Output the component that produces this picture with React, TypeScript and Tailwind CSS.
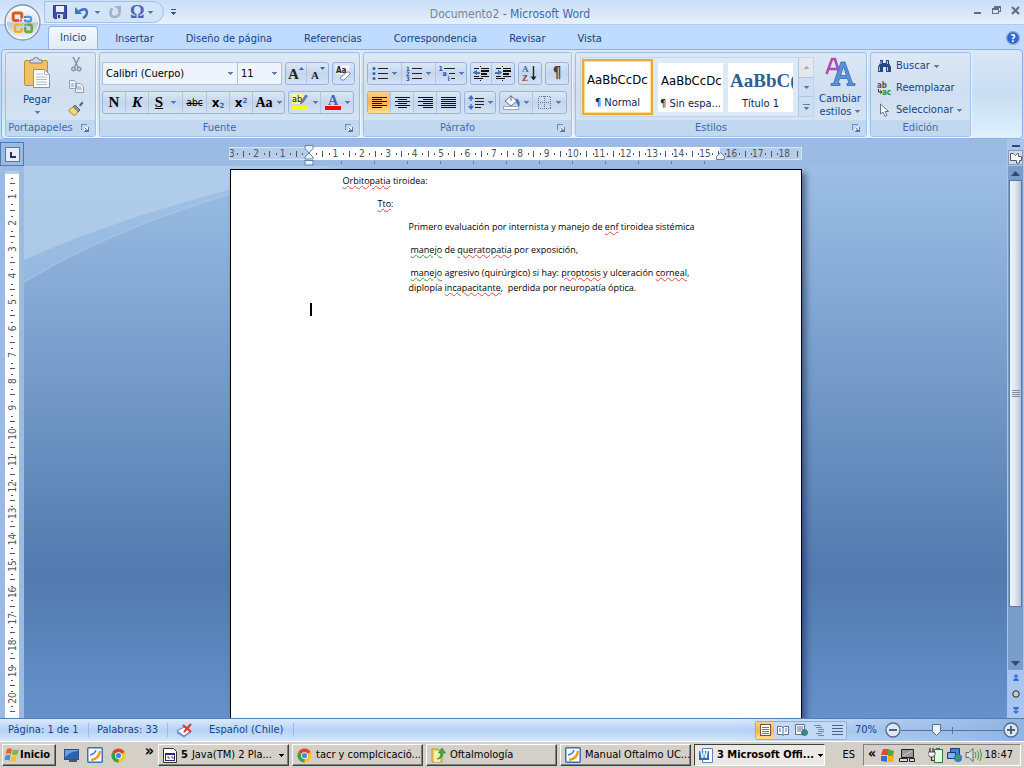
import type { ReactNode } from "react";
import { clsx } from "clsx";

const navy = "text-[#15428b]";
const boxClass =
  "flex h-[23px] items-stretch overflow-hidden rounded-[3px] border border-[#98b3d8] bg-gradient-to-b from-[#dbe7f6] via-[#c5d6ec] to-[#d3e3f5] divide-x divide-[#afc6e2]";

const tabs = [
  "Inicio",
  "Insertar",
  "Diseño de página",
  "Referencias",
  "Correspondencia",
  "Revisar",
  "Vista",
];

const styles = [
  { sample: "AaBbCcDc", name: "¶ Normal", heading: false },
  { sample: "AaBbCcDc", name: "¶ Sin espa...", heading: false },
  { sample: "AaBbC(", name: "Título 1", heading: true },
];

function Caret({ className = "text-[#5b7db1]" }: { className?: string }) {
  return (
    <svg width="5" height="3" viewBox="0 0 5 3" className={clsx("shrink-0", className)} shapeRendering="crispEdges">
      <path d="M0 0h5v1h-1v1h-1v1h-1v-1h-1v-1h-1z" fill="currentColor" />
    </svg>
  );
}

function Tool({
  label,
  width,
  caret,
  active,
  children,
}: {
  label: string;
  width: string;
  caret?: boolean;
  active?: boolean;
  children: ReactNode;
}) {
  return (
    <button
      type="button"
      aria-label={label}
      className={clsx(
        "flex items-center justify-center gap-1 text-black",
        width,
        active && "bg-gradient-to-b from-[#fbd08b] via-[#fdb04b] to-[#fde08c]"
      )}
    >
      {children}
      {caret && <Caret />}
    </button>
  );
}

function Launcher({ label }: { label: string }) {
  return (
    <button type="button" aria-label={label} className="absolute right-1.5 top-1">
      <svg width="8" height="8" viewBox="0 0 8 8" shapeRendering="crispEdges">
        <path d="M0.5 6V0.5H6" fill="none" stroke="#6a8cbb" />
        <path d="M3 3l3 3M7.5 3v4.5H3" fill="none" stroke="#5578ab" />
        <rect x="3" y="3" width="4" height="4" fill="#fff" opacity=".6" />
        <path d="M4 4h1v1h1v1h1v1h-3v-1h1v-1h-1z" fill="#5578ab" />
      </svg>
    </button>
  );
}

function Group({
  title,
  width,
  launcher,
  children,
}: {
  title: string;
  width: string;
  launcher?: boolean;
  children: ReactNode;
}) {
  return (
    <section
      className={clsx(
        "flex h-[85px] shrink-0 flex-col overflow-hidden rounded-[3px] border border-[#a3bfdf] bg-gradient-to-b from-[#dde8f5] via-[#cfdef0] to-[#d9e8f7] shadow-[1px_1px_0_#eef6ff]",
        width
      )}
    >
      <div className="flex flex-1">{children}</div>
      <div className="relative h-4 bg-[#c1d8f0] text-center leading-4 text-[#3e6aaa]">
        <span className={clsx(launcher && "pr-5")}>{title}</span>
        {launcher && <Launcher label={`Más opciones de ${title}`} />}
      </div>
    </section>
  );
}

function OfficeLogo() {
  return (
    <svg width="38" height="38" viewBox="0 0 38 38">
      <defs>
        <linearGradient id="orb" x1="0" y1="0" x2="0" y2="1">
          <stop offset="0" stopColor="#fbfcfe" />
          <stop offset=".48" stopColor="#dfe5ee" />
          <stop offset=".52" stopColor="#bcc7d6" />
          <stop offset="1" stopColor="#f4f8fc" />
        </linearGradient>
      </defs>
      <circle cx="18.500" cy="18.500" r="17.500" fill="url(#orb)" stroke="#7f93b2" strokeWidth="1.300" />
      <circle cx="18.500" cy="18.500" r="16.200" fill="none" stroke="#fff" opacity=".8" />
      <g fill="none" strokeLinecap="round">
        <path d="M14 16.500h-3q-1.800 0-1.800-1.800v-4q0-1.800 1.800-1.800h5q1.800 0 1.800 1.800v2.500" stroke="#dd5a1c" strokeWidth="3" />
        <path d="M22 12.800h3.500q1.500 0 1.500 1.500v1.500q0 1.500-1.500 1.500H22" stroke="#4b9bd8" strokeWidth="2.200" />
        <path d="M14 20.800h-1.500q-1.500 0-1.500 1.500v4q0 1.500 1.500 1.500h3.500q1.500 0 1.500-1.500V25" stroke="#f2ac28" strokeWidth="2.400" />
        <path d="M24 20.800h2q1.800 0 1.800 1.800v3.500q0 1.800-1.800 1.800h-3q-1.800 0-1.800-1.800V24" stroke="#6cab3a" strokeWidth="2.600" />
      </g>
      <g fill="#3b8fd0">
        <rect x="20" y="12" width="2" height="2" />
        <rect x="20" y="15.500" width="2" height="2" />
      </g>
      <g fill="#dd5a1c">
        <rect x="16" y="15.500" width="2" height="2" />
      </g>
      <rect x="16" y="20" width="2" height="2" fill="#f2ac28" />
      <rect x="20.500" y="20" width="2" height="2" fill="#6cab3a" />
    </svg>
  );
}

function Lines({ rows }: { rows: [number, number][] }) {
  return (
    <svg width="15" height="13" viewBox="0 0 15 13" shapeRendering="crispEdges">
      {rows.map(([x, w], i) => (
        <rect key={i} x={x} y={i * 2 + 1} width={w} height="1" fill="#111" />
      ))}
    </svg>
  );
}

const full: [number, number] = [0, 15];

function ListIcon({ kind }: { kind: "bullet" | "number" | "multi" }) {
  return (
    <svg width={kind === "multi" ? 17 : 16} height="15" viewBox="0 0 16 15">
      {kind === "bullet" &&
        [2.5, 7.5, 12.5].map((y) => <circle key={y} cx="2" cy={y} r="1.500" fill="#3a5fa8" />)}
      {kind === "number" &&
        ["1", "2", "3"].map((n, i) => (
          <text key={n} x="0" y={5 + i * 5} fontSize="6" fontWeight="bold" fill="#2d55a5">
            {n}
          </text>
        ))}
      {kind === "multi" && (
        <g fontSize="7" fontWeight="bold" fill="#2d55a5">
          <text x="0" y="5">1</text>
          <text x="4" y="10">a</text>
          <text x="9" y="15">i</text>
        </g>
      )}
      <g fill="#222" shapeRendering="crispEdges">
        {kind === "multi" ? (
          <>
            <rect x="5" y="2" width="11" height="1" />
            <rect x="10" y="7" width="6" height="1" />
            <rect x="12" y="12" width="4" height="1" />
          </>
        ) : (
          [2, 7, 12].map((y) => <rect key={y} x="6" y={y} width="10" height="1" />)
        )}
      </g>
    </svg>
  );
}

function IndentIcon({ right }: { right?: boolean }) {
  return (
    <svg width="17" height="15" viewBox="0 0 17 15" shapeRendering="crispEdges">
      <g fill="#111">
        <rect x="1" y="2" width="5" height="1" />
        <rect x="8" y="2" width="8" height="1" />
        <rect x="8" y="4" width="8" height="2" />
        <rect x="8" y="7" width="6" height="2" />
        <rect x="8" y="10" width="8" height="1" />
        <rect x="1" y="10" width="5" height="1" />
        <rect x="1" y="12" width="9" height="1" />
        <rect x="7" y="0" width="1" height="1" />
        <rect x="7" y="14" width="1" height="1" />
      </g>
      <path d={right ? "M7 6.500l-4-3v2h-3v2h3v2z" : "M0 6.500l4-3v2h3v2h-3v2z"} fill="#4472c4" />
    </svg>
  );
}

function Binoculars() {
  return (
    <svg width="15" height="14" viewBox="0 0 15 14">
      <path d="M3 1h3v3h3v-3h3v3l2 4v5h-5v-5h-3v5h-5v-5l2-4z" fill="#27477f" />
      <path d="M2.500 8v4M10.500 8v4M4 2v3M10.500 2v3" stroke="#b5cdf0" />
    </svg>
  );
}

function Chrome() {
  return (
    <svg width="15" height="15" viewBox="0 0 16 16" className="shrink-0">
      <circle cx="8" cy="8" r="7.500" fill="#f6c52c" />
      <path d="M8 8L1.500 4.250A7.500 7.500 0 0 1 14.500 4.250z" fill="#dc4434" />
      <path d="M8 8L1.500 4.250A7.500 7.500 0 0 0 8 15.500z" fill="#3f9e49" />
      <circle cx="8" cy="8" r="3.600" fill="#fff" />
      <circle cx="8" cy="8" r="2.800" fill="#4a86d8" />
    </svg>
  );
}

function SwooshDoc() {
  return (
    <svg width="16" height="16" viewBox="0 0 16 16" className="shrink-0">
      <rect x=".75" y=".75" width="14.500" height="14.500" rx="1" fill="#fff" stroke="#3d6fb4" strokeWidth="1.500" />
      <path d="M3 8q5-1 6-5" fill="none" stroke="#3b82d4" strokeWidth="1.500" />
      <path d="M4 13q8-1 9-9" fill="none" stroke="#f09a1a" strokeWidth="2.400" />
    </svg>
  );
}

function WindowsFlag() {
  return (
    <svg width="16" height="16" viewBox="0 0 16 16" className="shrink-0">
      <path d="M3 2q3-1.500 5 0l-1 5q-3-1.500-5.500 0z" fill="#e8602c" />
      <path d="M9 2.500q3 1.500 6 0l-1.500 5q-3 1.500-5.500 0z" fill="#7ab648" />
      <path d="M1.500 8.500q3-1.500 5 0l-1 5q-3-1.500-5 0z" fill="#4a90d9" />
      <path d="M7.500 9q3 1.500 5.500 0l-1.500 5q-2.500 1.500-5 0z" fill="#f5c02c" />
    </svg>
  );
}

const CM = 26.4;

function HorizontalRuler() {
  const zero = 80;
  const marks = Array.from({ length: 22 }, (_, i) => i - 3);
  return (
    <svg width="574" height="26" viewBox="0 0 574 26" className="block" role="img" aria-label="Regla horizontal">
      <rect x=".5" y="7.500" width="572" height="12" fill="#b4cde9" stroke="#d3e4f7" />
      <rect x={zero} y="7" width="411" height="13" fill="#fff" />
      <g fill="#4b5563" fontSize="10" textAnchor="middle">
        {marks.map((n) => {
          const x = zero + n * CM;
          return (
            <g key={n}>
              {n !== 0 && (
                <text x={n === -3 ? x + 2 : x} y="17">
                  {Math.abs(n)}
                </text>
              )}
              {n < 18 && <rect x={Math.round(x + CM * 0.28)} y="13" width="1" height="2" />}
              <rect x={Math.round(x + CM / 2)} y="11" width="1" height="6" />
              {n < 18 && <rect x={Math.round(x + CM * 0.74)} y="13" width="1" height="2" />}
            </g>
          );
        })}
      </g>
      {Array.from({ length: 12 }, (_, i) => (
        <rect key={i} x={112 + i * 33} y="21" width="1" height="3" fill="#5e7fae" />
      ))}
      <g fill="#e8f0fa" stroke="#6482ac">
        <path d="M76 5.500h8v3l-4 4.500 4 4v2h-8v-2l4-4-4-4.500z" />
        <rect x="76" y="20.500" width="8" height="4.500" />
        <path d="M487.500 19.500v-3l4-4 4 4v3z" />
      </g>
    </svg>
  );
}

function VerticalRuler() {
  return (
    <svg width="14" height="600" viewBox="0 0 14 600" className="block" role="img" aria-label="Regla vertical">
      <rect width="14" height="600" fill="#fff" />
      <rect width="14" height="3" fill="#b4cde9" />
      <g fill="#4b5563" fontSize="10" textAnchor="middle">
        {Array.from({ length: 21 }, (_, n) => {
          const y = n * CM - 1;
          return (
            <g key={n}>
              {n > 0 && (
                <text x="0" y="0" transform={`translate(11 ${y}) rotate(-90)`}>
                  {n}
                </text>
              )}
              <rect x="6" y={Math.round(y + CM * 0.3)} width="2" height="1" />
              <rect x="5" y={Math.round(y + CM / 2)} width="5" height="1" />
              <rect x="6" y={Math.round(y + CM * 0.74)} width="2" height="1" />
            </g>
          );
        })}
      </g>
    </svg>
  );
}

function Err({ children, grammar }: { children: ReactNode; grammar?: boolean }) {
  return (
    <span
      className={clsx(
        "underline decoration-wavy decoration-1 underline-offset-1",
        grammar ? "decoration-[#3c9a3c]" : "decoration-[#e04848]"
      )}
    >
      {children}
    </span>
  );
}

function TaskButton({ icon, active, children }: { icon: ReactNode; active?: boolean; children: ReactNode }) {
  return (
    <button
      type="button"
      className={clsx(
        "flex h-[22px] w-[131px] min-w-0 items-center gap-1 whitespace-nowrap border pl-1 pr-1 text-left text-black",
        active
          ? "border-b-white border-l-[#404040] border-r-white border-t-[#404040] bg-[#ebe9e5] font-bold"
          : "border-b-[#404040] border-l-white border-r-[#404040] border-t-white bg-[#d4d0c8] shadow-[inset_-1px_-1px_0_#808080]"
      )}
    >
      {icon}
      {children}
    </button>
  );
}

function TitleBar() {
  return (
    <header className="flex h-[25px] shrink-0 items-center border-b border-[#b0cdf0] bg-gradient-to-b from-[#c9dff8] via-[#d6e6fa] to-[#e6f1fe]">
      <div className="flex flex-1 items-center">
        <div className="ml-11 flex h-[22px] w-[120px] items-center rounded-r-full border border-[#a3c0e6] bg-[#d3e4f9] pl-2">
          <button type="button" aria-label="Guardar">
            <svg width="14" height="14" viewBox="0 0 14 14">
              <path d="M.5.5h13v13h-12l-1-1z" fill="#3f4fae" stroke="#2b3685" />
              <rect x="3" y="1" width="8" height="6" fill="#e9eefb" />
              <rect x="4" y="9" width="6" height="5" fill="#c9d2ee" />
              <rect x="5" y="10" width="2" height="3" fill="#2b3685" />
            </svg>
          </button>
          <button type="button" aria-label="Deshacer" className="ml-2 flex items-center gap-1.5">
            <svg width="14" height="13" viewBox="0 0 14 13">
              <path d="M4 5q7-4 8 1 0 4-4 6" fill="none" stroke="#3f6fc6" strokeWidth="2.400" />
              <path d="M0 1v7h7z" fill="#3f6fc6" />
            </svg>
            <Caret />
          </button>
          <button type="button" aria-label="Rehacer" disabled className="ml-2">
            <svg width="14" height="13" viewBox="0 0 14 13">
              <path d="M4 2q-4 9 3 9 6-1 4-7" fill="none" stroke="#a3b3cc" strokeWidth="2.600" />
              <path d="M6 0h7v6z" fill="#a3b3cc" />
            </svg>
          </button>
          <button type="button" aria-label="Símbolo" className="ml-2 flex items-center gap-1">
            <span className="font-[Liberation_Serif,serif] text-lg font-bold leading-none text-[#3f68b8]">Ω</span>
            <Caret />
          </button>
        </div>
        <button type="button" aria-label="Personalizar barra" className="ml-[7px] flex flex-col items-center gap-0.5">
          <span className="h-px w-[5px] bg-[#33558f]" />
          <Caret className="text-[#33558f]" />
        </button>
      </div>
      <h1 className="pt-1 text-xs text-[#3e6aaa]">
        <span className="text-[#74839b]">Documento2</span> - Microsoft Word
      </h1>
      <div className="flex flex-1 items-center justify-end gap-2.5 pb-1 pr-1 text-[#5f6f88]">
        <button type="button" aria-label="Minimizar">
          <svg width="8" height="9" viewBox="0 0 8 9">
            <rect x="0" y="6" width="7" height="2" fill="currentColor" />
          </svg>
        </button>
        <button type="button" aria-label="Restaurar">
          <svg width="9" height="8" viewBox="0 0 9 8" fill="none" stroke="currentColor" shapeRendering="crispEdges">
            <path d="M2.500 2V.5h6v5h-2M.5 2.500h6v5h-6zM2 1h6M1 3h6" />
          </svg>
        </button>
        <button type="button" aria-label="Cerrar">
          <svg width="9" height="9" viewBox="0 0 9 9" stroke="currentColor" strokeWidth="2.200">
            <path d="M1 1l7 7M8 1l-7 7" />
          </svg>
        </button>
      </div>
    </header>
  );
}

function Ribbon() {
  return (
    <div className="mx-px flex h-[90px] shrink-0 gap-[3px] rounded-[4px] border border-[#8db2e3] bg-gradient-to-b from-[#dae7f6] via-[#c9ddf2] to-[#dff1fe] pl-[3px] pt-0.5">
      <Group title="Portapapeles" width="w-[91px]" launcher>
        <div className="flex w-full">
          <button type="button" className={clsx("flex w-[62px] flex-col items-center pt-1", navy)}>
            <svg width="28" height="32" viewBox="0 0 28 32">
              <rect x="1.500" y="3.500" width="23" height="25" rx="1.500" fill="#eebf63" stroke="#c08e38" />
              <path d="M7 3h3q0-2.500 3-2.500T16 3h3v3H7z" fill="#d6dae2" stroke="#77808f" />
              <path d="M10.500 12.500h11l5 5v13h-16z" fill="#fff" stroke="#8793a8" />
              <path d="M21.500 12.500v5h5M13 17h7M13 20h11M13 22.500h11M13 25h11M13 27.500h11" fill="none" stroke="#aeb9cc" />
            </svg>
            <span className="pt-1">Pegar</span>
            <span className="pt-1">
              <Caret />
            </span>
          </button>
          <div className="flex w-4 flex-col items-center justify-between pb-1 pt-1">
            <button type="button" aria-label="Cortar">
              <svg width="11" height="15" viewBox="0 0 11 15" fill="none" stroke="#8594ac">
                <path d="M2 0l5 10M8.500 0l-5 10" strokeWidth="1.500" />
                <circle cx="2.500" cy="12" r="1.800" strokeWidth="1.400" />
                <circle cx="8" cy="12" r="1.800" strokeWidth="1.400" />
              </svg>
            </button>
            <button type="button" aria-label="Copiar">
              <svg width="15" height="13" viewBox="0 0 15 13" fill="#eef2f8" stroke="#93a1b8">
                <path d="M.5.5h5l2 2v6h-7zM6.500 3.500h5l3 3v6h-8zM8 7h4M8 9h5M2 4h3M2 6h3" />
              </svg>
            </button>
            <button type="button" aria-label="Copiar formato">
              <svg width="16" height="15" viewBox="0 0 16 15">
                <path d="M11 4l3-3.500 1.500 1.500-3 3.500z" fill="#56657f" />
                <path d="M7 4l5 5-2 2-5-5z" fill="#8494b8" stroke="#4a5a80" />
                <path d="M5 6l5 5-3 3.500q-4-1-6.500-5z" fill="#f3d97a" stroke="#a88a30" />
              </svg>
            </button>
          </div>
        </div>
      </Group>

      <Group title="Fuente" width="w-[261px]" launcher>
        <div className="flex flex-col gap-1.5 pl-0.5 pt-[9px]">
          <div className="flex gap-[3px]">
            <div className="flex h-[23px]">
              <label className="relative flex">
                <span className="sr-only">Fuente</span>
                <select className="w-[136px] appearance-none border border-[#abc1de] bg-[#eef4fc] pl-[3px] text-black">
                  <option>Calibri (Cuerpo)</option>
                </select>
                <span className="pointer-events-none absolute right-[5px] top-[10px]">
                  <Caret />
                </span>
              </label>
              <label className="relative flex">
                <span className="sr-only">Tamaño de fuente</span>
                <select className="w-[44px] appearance-none border border-l-0 border-[#abc1de] bg-[#eef4fc] pl-[3px] text-black">
                  <option>11</option>
                </select>
                <span className="pointer-events-none absolute right-[5px] top-[10px]">
                  <Caret />
                </span>
              </label>
            </div>
            <div className={boxClass}>
              <Tool label="Agrandar fuente" width="w-[21px]">
                <svg width="16" height="15" viewBox="0 0 16 15" className="font-[Liberation_Serif,serif]">
                  <text x="0" y="13" fontSize="15" fontWeight="bold" fill="#222">A</text>
                  <path d="M11 4l2.500-3 2.500 3z" fill="#3b64ad" />
                </svg>
              </Tool>
              <Tool label="Encoger fuente" width="w-[21px]">
                <svg width="14" height="15" viewBox="0 0 14 15" className="font-[Liberation_Serif,serif]">
                  <text x="0" y="13" fontSize="11" fontWeight="bold" fill="#222">A</text>
                  <path d="M9 1h5l-2.500 3z" fill="#3b64ad" />
                </svg>
              </Tool>
            </div>
            <div className={boxClass}>
              <Tool label="Borrar formato" width="w-[21px]">
                <svg width="17" height="17" viewBox="0 0 17 17">
                  <rect x=".5" y=".5" width="14" height="9" fill="#fff" opacity=".7" />
                  <text x="1" y="8" fontSize="8" fontWeight="bold" fill="#222">Aa</text>
                  <path d="M5 13l7-6q3-1 3 2l-6 6q-3 1-4-2z" fill="#fff" stroke="#7c8698" />
                </svg>
              </Tool>
            </div>
          </div>
          <div className="flex gap-[3px]">
            <div className={clsx(boxClass, "font-[Liberation_Serif,serif] text-[15px] font-bold leading-none")}>
              <Tool label="Negrita" width="w-[23px]"><b>N</b></Tool>
              <Tool label="Cursiva" width="w-[23px]"><i>K</i></Tool>
              <Tool label="Subrayado" width="w-[34px]" caret><u className="mr-1">S</u></Tool>
              <Tool label="Tachado" width="w-6"><s className="font-[DejaVu_Sans_Condensed,sans-serif] text-[10px] font-normal">abc</s></Tool>
              <Tool label="Subíndice" width="w-[23px]">
                <span className="font-[DejaVu_Sans,sans-serif] text-xs">x<sub className="text-[7px] text-[#3b64ad]">2</sub></span>
              </Tool>
              <Tool label="Superíndice" width="w-[23px]">
                <span className="font-[DejaVu_Sans,sans-serif] text-xs">x<sup className="text-[7px] text-[#3b64ad]">2</sup></span>
              </Tool>
              <Tool label="Cambiar mayúsculas" width="w-[31px]" caret>
                <span className="text-sm">Aa</span>
              </Tool>
            </div>
            <div className={boxClass}>
              <Tool label="Color de resaltado" width="w-8" caret>
                <svg width="17" height="17" viewBox="0 0 17 17">
                  <rect x="0" y="0" width="11" height="10" fill="#fff7a0" />
                  <text x="0" y="8" fontSize="9" fill="#111">ab</text>
                  <path d="M15.500 2l-5 7-2 1 1-3 4-6z" fill="#7187b3" stroke="#41547d" strokeWidth=".6" />
                  <rect x="0" y="12" width="16" height="4" fill="#ff0" />
                </svg>
              </Tool>
              <Tool label="Color de fuente" width="w-8" caret>
                <svg width="16" height="17" viewBox="0 0 16 17" className="font-[Liberation_Serif,serif]">
                  <text x="3" y="11" fontSize="14" fontWeight="bold" fill="#3d62a8">A</text>
                  <rect x="0" y="12" width="16" height="4" fill="#f00" />
                </svg>
              </Tool>
            </div>
          </div>
        </div>
      </Group>

      <Group title="Párrafo" width="w-[209px]" launcher>
        <div className="flex flex-col gap-1.5 pl-[3px] pt-[9px]">
          <div className="flex gap-[3px]">
            <div className={boxClass}>
              <Tool label="Viñetas" width="w-[34px]" caret><ListIcon kind="bullet" /></Tool>
              <Tool label="Numeración" width="w-[34px]" caret><ListIcon kind="number" /></Tool>
              <Tool label="Lista multinivel" width="w-[30px]" caret><ListIcon kind="multi" /></Tool>
            </div>
            <div className={boxClass}>
              <Tool label="Disminuir sangría" width="w-[21px]"><IndentIcon /></Tool>
              <Tool label="Aumentar sangría" width="w-[22px]"><IndentIcon right /></Tool>
            </div>
            <div className={boxClass}>
              <Tool label="Ordenar" width="w-[22px]">
                <svg width="16" height="17" viewBox="0 0 16 17" fontWeight="bold" fontSize="9" className="font-[Liberation_Serif,serif]">
                  <text x="0" y="7" fill="#3d62a8">A</text>
                  <text x="0" y="16" fill="#9c3030">Z</text>
                  <path d="M11.500 1v13" stroke="#222" strokeWidth="1.400" />
                  <path d="M8.500 11.500h6l-3 4z" fill="#222" />
                </svg>
              </Tool>
            </div>
            <div className={boxClass}>
              <Tool label="Mostrar todo" width="w-[22px]">
                <span className="text-[15px] font-bold leading-none text-[#444]">¶</span>
              </Tool>
            </div>
          </div>
          <div className="flex gap-[3px]">
            <div className={boxClass}>
              <Tool label="Alinear a la izquierda" width="w-[23px]" active>
                <Lines rows={[full, [0, 10], full, [0, 10], full, [0, 10]]} />
              </Tool>
              <Tool label="Centrar" width="w-[23px]">
                <Lines rows={[full, [3, 9], full, [3, 9], full, [3, 9]]} />
              </Tool>
              <Tool label="Alinear a la derecha" width="w-[23px]">
                <Lines rows={[full, [5, 10], full, [5, 10], full, [5, 10]]} />
              </Tool>
              <Tool label="Justificar" width="w-[23px]">
                <Lines rows={[full, full, full, full, full, full]} />
              </Tool>
            </div>
            <div className={boxClass}>
              <Tool label="Interlineado" width="w-[30px]" caret>
                <svg width="16" height="15" viewBox="0 0 16 15">
                  <path d="M3 2v4M3 9v4" stroke="#3f6fc6" strokeWidth="1.400" />
                  <path d="M0 4l3-4 3 4zM0 11l3 4 3-4z" fill="#3f6fc6" />
                  <path d="M7 3.500h9M7 6.500h9M7 9.500h9M7 12.500h6" stroke="#222" shapeRendering="crispEdges" />
                </svg>
              </Tool>
            </div>
            <div className={boxClass}>
              <Tool label="Sombreado" width="w-[33px]" caret>
                <svg width="17" height="17" viewBox="0 0 17 17">
                  <path d="M2 7l6-5 6 5-6 5z" fill="#f5f8fc" stroke="#5f7397" />
                  <path d="M8 7V1.500" stroke="#5f7397" />
                  <path d="M13 5q4 1 3 7l-2-3z" fill="#3f6fc6" stroke="#3f6fc6" />
                  <rect x=".5" y="12.500" width="15" height="3" fill="#fff" stroke="#a0a6b0" />
                </svg>
              </Tool>
              <Tool label="Bordes" width="w-[33px]" caret>
                <svg width="14" height="14" viewBox="0 0 14 14" shapeRendering="crispEdges">
                  <path d="M.5.5h12v12h-12zM6.500 0v12M0 6.500h12" fill="none" stroke="#5f7397" strokeDasharray="1 1" />
                  <path d="M0 12.500h13" stroke="#5f7397" strokeDasharray="1 1" />
                </svg>
              </Tool>
            </div>
          </div>
        </div>
      </Group>

      <Group title="Estilos" width="w-[292px]" launcher>
        <div className="flex flex-1 items-start pl-1 pt-1">
          <div className="flex h-[60px] items-center gap-[5px] border border-[#c0d4ec] bg-[#dce9f7] pl-px">
            {styles.map((style, i) => (
              <button
                key={style.name}
                type="button"
                className={clsx(
                  "flex shrink-0 flex-col items-center justify-end overflow-hidden bg-white",
                  i === 0
                    ? "h-[56px] w-[71px] border-2 border-[#e9a93a] pb-0.5 shadow-[inset_0_0_0_1px_#fbe08f]"
                    : "h-[49px] w-[65px]"
                )}
              >
                <span
                  className={clsx(
                    "flex h-[30px] w-full items-center overflow-hidden whitespace-nowrap",
                    style.heading
                      ? "pl-0.5 font-[Liberation_Serif,serif] text-[19px] font-bold text-[#2f5f8f]"
                      : "pl-[3px] text-[13px] text-black"
                  )}
                >
                  {style.sample}
                </span>
                <span className="whitespace-nowrap leading-[16px] text-[#0a1f4f]">{style.name}</span>
              </button>
            ))}
            <div className="flex h-full flex-col divide-y divide-[#afc6e2] border-l border-[#afc6e2]">
              <button type="button" aria-label="Subir" className="flex w-[14px] flex-1 items-center justify-center bg-[#e6e8ec]">
                <Caret className="rotate-180 text-[#a5acb8]" />
              </button>
              <button type="button" aria-label="Bajar" className="flex w-[14px] flex-1 items-center justify-center bg-[#cfdff3]">
                <Caret />
              </button>
              <button type="button" aria-label="Más" className="flex w-[14px] flex-1 flex-col items-center justify-center gap-0.5 bg-[#cfdff3]">
                <span className="h-px w-[7px] bg-[#5b7db1]" />
                <Caret />
              </button>
            </div>
          </div>
          <button type="button" className={clsx("flex flex-1 flex-col items-center leading-[13px]", navy)}>
            <svg width="32" height="31" viewBox="0 0 32 31">
              <path d="M2.500 17L8 2h3l4 13M5 12h8" fill="none" stroke="#b04cb0" strokeWidth="2.600" />
              <path d="M7 28.500v-2h2.500L17 5h4l7.500 21.500H31v2h-8v-2h2l-1.500-5h-8l-1.500 5h2v2zM16.500 18.500h6L19.500 9.500z" fill="#5b93da" fillRule="evenodd" stroke="#3468ab" strokeWidth=".8" />
            </svg>
            <span className="pt-1">Cambiar</span>
            <span className="flex items-center gap-1">estilos <Caret /></span>
          </button>
        </div>
      </Group>

      <Group title="Edición" width="w-[101px]">
        <div className={clsx("flex flex-col items-start gap-1 pl-1.5 pt-1", navy)}>
          <button type="button" className="flex h-[18px] items-center gap-1">
            <Binoculars />
            Buscar
            <Caret />
          </button>
          <button type="button" className="flex h-[18px] items-center gap-[3px]">
            <svg width="16" height="15" viewBox="0 0 16 15" fontWeight="bold" fontSize="8">
              <text x="0" y="7" fill="#555">ab</text>
              <text x="5" y="14" fill="#2d8a2d">ac</text>
              <path d="M1.500 8v3h3M3 9.500l2 1.500-2 1.500" fill="none" stroke="#333" />
            </svg>
            Reemplazar
          </button>
          <button type="button" className="flex h-[18px] items-center gap-1">
            <svg width="15" height="14" viewBox="0 0 15 14">
              <path d="M3.500 1v10l2.500-2 2 4.500 2-1-2-4h3.500z" fill="#fff" stroke="#66728a" />
            </svg>
            Seleccionar
            <Caret />
          </button>
        </div>
      </Group>
    </div>
  );
}

function StatusBar() {
  return (
    <footer className={clsx("flex h-[23px] shrink-0 items-center border-t border-[#567db0] bg-gradient-to-b from-[#dceafd] via-[#b5d2f6] to-[#d5e7fc]", navy)}>
      <span className="w-[89px] border-r border-[#9cbce6] pl-2">Página: 1 de 1</span>
      <span className="w-[79px] border-r border-[#9cbce6] pl-2">Palabras: 33</span>
      <button type="button" aria-label="Revisión ortográfica" className="pl-2">
        <svg width="17" height="15" viewBox="0 0 17 15">
          <path d="M1 8l7-4 7 4-7 5z" fill="#fff" stroke="#5f7ba8" />
          <path d="M1 8v2.500l7 4 7-5V8l-7 5z" fill="#6f96cf" />
          <path d="M7 2l8 7M15 1L8 9" stroke="#e0392b" strokeWidth="2" />
        </svg>
      </button>
      <span className="w-[101px] border-r border-[#9cbce6] pl-4">Español (Chile)</span>
      <div className="flex h-full flex-1 items-center justify-end bg-gradient-to-r from-transparent from-60% to-[#8fb4e3]">
        <div className="flex h-[19px] rounded-[2px] border border-[#8fb0dc] bg-[#c3d9f4]">
          <Tool label="Diseño de impresión" width="w-[18px]" active>
            <svg width="11" height="12" viewBox="0 0 11 12" shapeRendering="crispEdges">
              <path d="M.5.5h10v11h-10z" fill="#fff" stroke="#6d5a3a" />
              <path d="M2 3.500h7M2 5.500h7M2 7.500h7M2 9.500h7" stroke="#8a7450" />
            </svg>
          </Tool>
          <Tool label="Lectura" width="w-[18px]">
            <svg width="12" height="11" viewBox="0 0 12 11" fill="#fff" stroke="#5a6f94">
              <path d="M.5 1.500h4l1.500 1 1.500-1h4v8h-4l-1.500 1-1.500-1h-4zM6 2v8M2 4h2M2 6h2M8 4h2M8 6h2" />
            </svg>
          </Tool>
          <Tool label="Diseño web" width="w-[18px]">
            <svg width="13" height="12" viewBox="0 0 13 12">
              <path d="M.5.5h9v10h-9zM2 3h6M2 5h6M2 7h4" fill="#fff" stroke="#5a6f94" />
              <circle cx="9.500" cy="8.500" r="3" fill="#3c8f6d" stroke="#2d5f9a" strokeWidth=".8" />
            </svg>
          </Tool>
          <Tool label="Esquema" width="w-[18px]">
            <svg width="11" height="12" viewBox="0 0 11 12" stroke="#7486a5" shapeRendering="crispEdges">
              <path d="M0 1.500h7M2 3.500h6M4 5.500h6M4 7.500h6M2 9.500h6M4 11.500h6" />
            </svg>
          </Tool>
          <Tool label="Borrador" width="w-[18px]">
            <svg width="11" height="12" viewBox="0 0 11 12" stroke="#4d6186" shapeRendering="crispEdges">
              <path d="M0 1.500h11M0 4.500h11M0 7.500h11M0 10.500h11" />
            </svg>
          </Tool>
        </div>
        <span className="w-[38px] pl-2">70%</span>
        <ZoomButton label="Alejar" />
        <div className="relative h-4 w-[102px]">
          <svg viewBox="0 0 102 16" className="h-4 w-full">
            <path d="M0 8.500h102M51.500 5v7" stroke="#5673a0" />
            <path d="M31.500 2.500h8v7l-4 4-4-4z" fill="#eef3fa" stroke="#5b6f92" />
          </svg>
          <input type="range" aria-label="Zoom" min="10" max="500" defaultValue="70" className="absolute inset-0 w-full opacity-0" />
        </div>
        <ZoomButton label="Acercar" plus />
        <span className="w-[5px]" />
      </div>
    </footer>
  );
}

function ZoomButton({ label, plus }: { label: string; plus?: boolean }) {
  return (
    <button type="button" aria-label={label}>
      <svg width="16" height="16" viewBox="0 0 16 16">
        <circle cx="8" cy="8" r="7" fill="#dfe7f2" stroke="#566a8b" strokeWidth="1.300" />
        <path d={plus ? "M4 8h8M8 4v8" : "M4 8h8"} stroke="#4d5f80" strokeWidth="2" />
      </svg>
    </button>
  );
}

function Taskbar() {
  return (
    <nav className="flex h-[27px] shrink-0 items-center border-t border-white bg-[#d4d0c8] pl-0.5 pr-[3px] text-black">
      <button
        type="button"
        className="flex h-[22px] w-[54px] items-center border border-b-[#404040] border-l-white border-r-[#404040] border-t-white pl-px font-bold shadow-[inset_-1px_-1px_0_#808080]"
      >
        <WindowsFlag />
        Inicio
      </button>
      <div className="flex w-[102px] items-center gap-2 pl-2">
        <button type="button" aria-label="Escritorio">
          <svg width="15" height="13" viewBox="0 0 15 13">
            <rect x=".5" y=".5" width="14" height="10" fill="#2b62b8" stroke="#35507d" />
            <path d="M1 8q6-6 13-6V1H1z" fill="#6ba0e0" />
            <rect x="5" y="11" width="8" height="2" fill="#555" />
          </svg>
        </button>
        <button type="button" aria-label="Manual"><SwooshDoc /></button>
        <button type="button" aria-label="Chrome"><Chrome /></button>
        <span className="mb-2 ml-auto pr-1 text-base font-bold leading-none">»</span>
      </div>
      <div className="flex min-w-0 flex-1 gap-[3px]">
        <TaskButton
          icon={
            <svg width="14" height="15" viewBox="0 0 14 15" className="shrink-0">
              <path d="M.5.5h10l3 3v11h-13z" fill="#fff" stroke="#333" />
              <rect x="2.500" y="5.500" width="9" height="7" fill="#fff" stroke="#1b2f7a" />
              <rect x="2" y="5" width="10" height="2" fill="#1b2f7a" />
              <path d="M4 9h2v2M8 9h2v2" stroke="#b03030" fill="none" />
            </svg>
          }
        >
          <b>5</b> Java(TM) 2 Pla... <span className="ml-auto"><Caret className="text-black" /></span>
        </TaskButton>
        <TaskButton icon={<Chrome />}>tacr y complcicació...</TaskButton>
        <TaskButton
          icon={
            <svg width="15" height="16" viewBox="0 0 15 16" className="shrink-0">
              <path d="M1 2h5l1 1h4v12H1z" fill="#e9cf6a" stroke="#b79a37" />
              <path d="M3 4h6v11H3z" fill="#f8ecab" />
              <path d="M6 12q4-1 4-6H7.500L11 1l3.500 5H12q0 6-6 6z" fill="#3fae3f" stroke="#237a23" strokeWidth=".6" />
            </svg>
          }
        >
          Oftalmología
        </TaskButton>
        <TaskButton icon={<SwooshDoc />}>Manual Oftalmo UC...</TaskButton>
        <TaskButton
          active
          icon={
            <svg width="14" height="15" viewBox="0 0 14 15" className="shrink-0">
              <path d="M3.500.5h10v14h-10z" fill="#fff" stroke="#5f7fb5" />
              <rect x="0" y="3" width="10" height="9" fill="#3a66b0" />
              <text x="1" y="10" fontSize="8" fontWeight="bold" fill="#fff">W</text>
            </svg>
          }
        >
          3 Microsoft Offi... <span className="ml-auto"><Caret className="text-black" /></span>
        </TaskButton>
      </div>
      <span className="px-2">ES</span>
      <div className="flex h-[22px] w-[158px] items-center border border-b-white border-l-[#808080] border-r-white border-t-[#808080] pl-1">
        <span className="pb-1 pr-1 text-sm font-bold leading-none">«</span>
        <svg width="15" height="15" viewBox="0 0 15 15">
          <path d="M3 1h5v6H1z" fill="#e04a2a" />
          <path d="M8 1l6 2-1 5H8z" fill="#58a83c" />
          <path d="M1 8h6v6l-6-1z" fill="#2f6fd0" />
          <path d="M8 8h6l-1 6H8z" fill="#f2b21f" />
        </svg>
        <svg width="17" height="15" viewBox="0 0 17 15" className="ml-1">
          <path d="M2.500 1.500h12v8h-12z" fill="#999" stroke="#222" />
          <path d="M4 8l9-5" stroke="#ccc" />
          <path d="M.5 10.500h8v3h-8zM10.500 10.500h5v3h-5z" fill="#ddd" stroke="#222" />
        </svg>
        <svg width="17" height="16" viewBox="0 0 17 16" className="ml-3">
          <rect x="6.500" y="2.500" width="8" height="13" fill="#e9f7df" stroke="#2f7d46" />
          <rect x="8" y="1" width="4" height="2" fill="#2f7d46" />
          <path d="M0 5h7v2.500L5 10H2L0 7.500z" fill="#f4f4f4" stroke="#333" strokeWidth=".8" />
          <path d="M2 1v4M5 1v4M3.500 10v3.500H6" fill="none" stroke="#333" strokeWidth="1.200" />
        </svg>
        <svg width="16" height="16" viewBox="0 0 16 16" className="ml-0.5">
          <path d="M3.500 1.500h9v7h-9z" fill="#3b82d8" stroke="#1d3a70" />
          <path d="M.5 5.500h8v6h-8z" fill="#7db4ee" stroke="#1d3a70" />
          <circle cx="11" cy="11" r="4" fill="#2d7fc8" />
          <path d="M9 9q3-2 4 1-1 3-3 3z" fill="#46a34a" />
        </svg>
        <svg width="17" height="16" viewBox="0 0 17 16" className="ml-0.5">
          <path d="M1 5.500h3l4-4v13l-4-4H1z" fill="#ddd" stroke="#666" />
          <path d="M10 5q2 3 0 6M12.500 3.500q3 4.500 0 9M15 2q3 6 0 12" fill="none" stroke="#3f9a3f" />
        </svg>
        <time className="ml-auto pr-[7px]">18:47</time>
      </div>
    </nav>
  );
}

export default function App() {
  return (
    <div className="relative flex h-screen flex-col overflow-hidden bg-[#bfdbff] font-[DejaVu_Sans_Condensed,Noto_Sans,sans-serif] text-[11px] leading-[14px]">
      <button type="button" aria-label="Botón de Office" className="absolute left-1 top-1 z-10">
        <OfficeLogo />
      </button>
      <TitleBar />
      <div className="flex h-6 shrink-0 items-end pl-12 pr-1">
        {tabs.map((tab, i) => (
          <button
            key={tab}
            type="button"
            className={clsx(
              "mr-0.5 whitespace-nowrap",
              navy,
              i === 0
                ? "h-[23px] rounded-t-[4px] border border-b-0 border-[#8db2e3] bg-gradient-to-b from-[#f4f9ff] to-[#dfebf8] px-[11px]"
                : "h-[21px] px-[15px]"
            )}
          >
            {tab}
          </button>
        ))}
        <button type="button" aria-label="Ayuda" className="mb-1 ml-auto">
          <svg width="14" height="14" viewBox="0 0 14 14">
            <circle cx="7" cy="7" r="6.400" fill="#2f66d0" stroke="#8fa8d6" strokeWidth="1.200" />
            <text x="7" y="11" fontSize="10" fontWeight="bold" fill="#fff" textAnchor="middle">?</text>
          </svg>
        </button>
      </div>
      <Ribbon />

      <main className="flex min-h-0 flex-1 bg-[#9bbbe3]">
        <div className="flex w-6 shrink-0 flex-col items-center gap-[5px] overflow-hidden pt-[3px]">
          <button type="button" aria-label="Tabulación izquierda" className="flex h-[24px] w-full shrink-0 items-center justify-center border border-[#5079bd]">
            <svg width="15" height="15" viewBox="0 0 15 15" shapeRendering="crispEdges">
              <path d="M.5.5h14v14h-14z" fill="#e4edf9" stroke="#5079bd" />
              <path d="M5 5h2v4h4v2H5z" fill="#1f3560" />
            </svg>
          </button>
          <div className="min-h-0 flex-1 overflow-hidden">
            <VerticalRuler />
          </div>
        </div>
        <div className="flex min-w-0 flex-1 flex-col">
          <div className="flex h-[27px] shrink-0 justify-center pt-px">
            <HorizontalRuler />
          </div>
          <div className="relative flex min-h-0 flex-1 justify-center overflow-hidden bg-gradient-to-b from-[#9dbfe6] via-[#527aae] via-[74%] to-[#6691cc] pt-[3px]">
            <svg width="320" height="120" viewBox="0 0 320 120" className="absolute left-0 top-0">
              <path d="M0 0h320Q130 36 0 116z" fill="#a9c8e9" opacity=".45" />
              <path d="M0 0h310Q130 36 0 94z" fill="#c0d8f0" opacity=".5" />
              <path d="M320 0Q130 38 0 116" fill="none" stroke="#b5d0ee" opacity=".5" strokeWidth="1.500" />
            </svg>
            <article
              lang="es"
              className="relative flex h-[840px] w-[572px] shrink-0 flex-col gap-2 border border-black bg-white pt-[3px] font-[Open_Sans,sans-serif] text-[9px] leading-[15px] text-black shadow-[4px_4px_6px_rgba(20,40,80,0.55)]"
            >
              <p className="pl-28"><Err>Orbitopatia</Err> tiroidea:</p>
              <p className="pl-[147px]"><Err>Tto</Err>:</p>
              <p className="pl-[178px]">
                Primero evaluación por internista y manejo de <Err>enf</Err> tiroidea sistémica
              </p>
              <p className="pl-[180px]"><Err grammar>manejo</Err> de <Err>queratopatia</Err> por exposición,</p>
              <p className="pl-[178px]">
                <span className="pl-0.5"><Err grammar>manejo</Err></span> agresivo (quirúrgico) si hay: <Err>proptosis</Err> y ulceración <Err>corneal</Err>,
                <br />
                diplopía <Err>incapacitante</Err>,&nbsp; perdida por neuropatía óptica.
              </p>
              <span className="ml-[79px] h-[13px] w-0.5 bg-black" />
            </article>
          </div>
        </div>
        <div className="flex w-[17px] shrink-0 flex-col items-center bg-[#a7c5ee] pt-1">
          <span className="mb-[3px] mt-0.5 h-0.5 w-2 bg-[#2f4a78]" />
          <button type="button" aria-label="Regla" className="mb-px flex h-[15px] w-[15px] shrink-0 items-center justify-center border border-[#8d9cb4] bg-[#d5dbe6]">
            <svg width="12" height="12" viewBox="0 0 12 12" fill="#fff" stroke="#44597f">
              <path d="M.5 1.500h3l2 2 2-2h1v3h3v4h-2v2.500h-3V8.500h-6z" />
            </svg>
          </button>
          <div className="flex w-[15px] flex-1 flex-col items-center bg-[#789dca]">
            <button type="button" aria-label="Desplazar arriba" className="flex h-[14px] items-center">
              <svg width="9" height="5" viewBox="0 0 9 5"><path d="M0 5l4.500-5L9 5z" fill="#33496f" /></svg>
            </button>
            <div className="flex w-[13px] grow-[17] flex-col items-center justify-center gap-px border border-[#5e789f] bg-gradient-to-r from-[#f2f5fa] via-[#dfe6f0] to-[#b4c3da]">
              {[0, 1, 2, 3].map((i) => (
                <span key={i} className="h-px w-2 bg-[#7d8ba3]" />
              ))}
            </div>
            <div className="grow-[2]" />
            <button type="button" aria-label="Desplazar abajo" className="flex h-[14px] items-center">
              <svg width="9" height="5" viewBox="0 0 9 5"><path d="M0 0h9L4.500 5z" fill="#33496f" /></svg>
            </button>
          </div>
          <div className="flex h-12 flex-col items-center justify-around text-[#3a6fe0]">
            <button type="button" aria-label="Página anterior">
              <svg width="6" height="7" viewBox="0 0 6 7" fill="currentColor"><path d="M0 3l3-3 3 3zM0 6l3-3 3 3v1H0z" /></svg>
            </button>
            <button type="button" aria-label="Seleccionar objeto">
              <svg width="8" height="8" viewBox="0 0 8 8"><circle cx="4" cy="4" r="3.200" fill="#ccc" stroke="#222" /></svg>
            </button>
            <button type="button" aria-label="Página siguiente" className="rotate-180">
              <svg width="6" height="7" viewBox="0 0 6 7" fill="currentColor"><path d="M0 3l3-3 3 3zM0 6l3-3 3 3v1H0z" /></svg>
            </button>
          </div>
        </div>
      </main>
      <StatusBar />
      <Taskbar />
    </div>
  );
}
